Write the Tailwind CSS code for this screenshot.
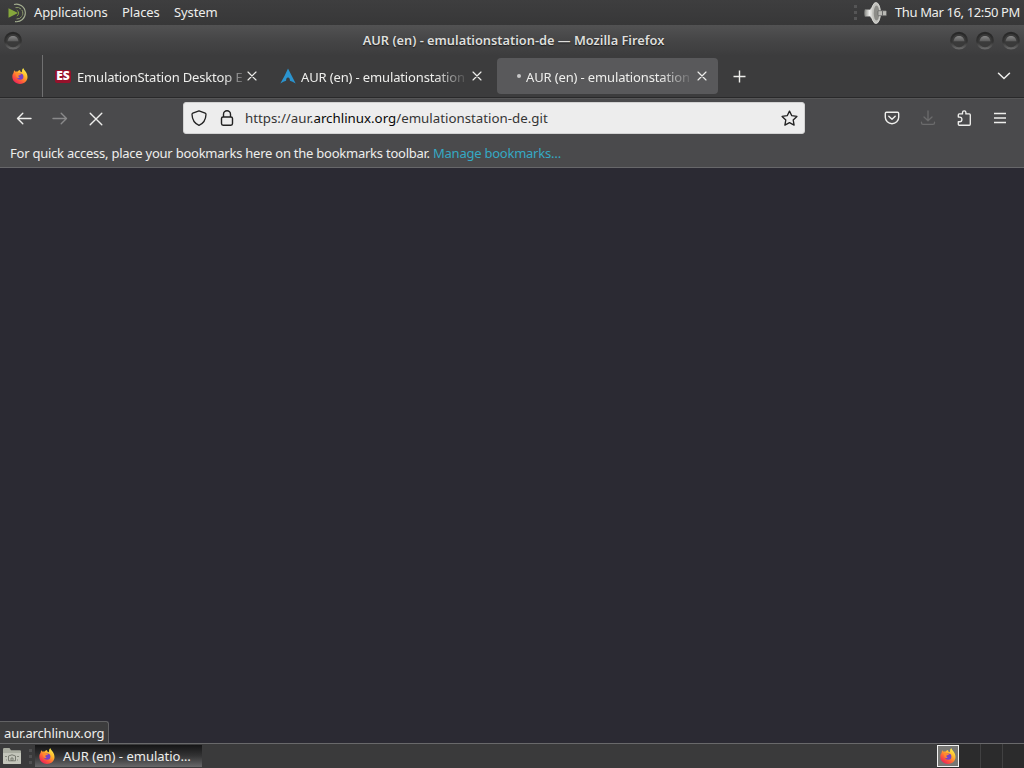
<!DOCTYPE html>
<html lang="en">
<head>
	<meta charset="utf-8">
	<title>AUR (en) - emulationstation-de — Mozilla Firefox</title>
	<script src="https://cdn.jsdelivr.net/npm/@tailwindcss/browser@4"></script>
</head>
<body class="w-screen h-screen overflow-hidden flex flex-col bg-[#2b2a33] text-[#eeeeec] text-[13px] leading-none whitespace-nowrap font-['Noto_Sans',sans-serif]">
	<!-- shared icons -->
	<svg class="absolute w-0 h-0">
		<defs>
			<linearGradient id="fx-flame" x1="0.85" y1="0.1" x2="0.25" y2="0.95">
				<stop offset="0" stop-color="#fff04a"/>
				<stop offset="0.35" stop-color="#ffb52c"/>
				<stop offset="0.65" stop-color="#ff6a35"/>
				<stop offset="1" stop-color="#ef2556"/>
			</linearGradient>
			<linearGradient id="silver" x1="0" y1="0" x2="1" y2="0">
				<stop offset="0" stop-color="#888a85"/>
				<stop offset="0.5" stop-color="#eeeeec"/>
				<stop offset="1" stop-color="#9a9a96"/>
			</linearGradient>
			<linearGradient id="dome" x1="0" y1="0" x2="0" y2="1">
				<stop offset="0" stop-color="#868686"/>
				<stop offset="1" stop-color="#585858"/>
			</linearGradient>
			<linearGradient id="rim" x1="0" y1="0" x2="0" y2="1">
				<stop offset="0" stop-color="#272727"/>
				<stop offset="0.6" stop-color="#343434"/>
				<stop offset="1" stop-color="#666666"/>
			</linearGradient>
			<symbol id="firefox" viewBox="0 0 16 16">
				<path fill="url(#fx-flame)" d="M2.6 2.2 3.5 3.8C4.3 3.4 5 3.4 5.7 3.6 6.5 2.6 7.4 2.2 8 2.1L8.3 3.6 10 4.2C9.8 2.5 10.2 1.1 11.2 0 11.6 1.6 13 2.5 13.9 4 16 7.3 16 10.6 14 13.2 11 16.7 5.3 16.8 2.2 13.4-.2 10.8-.1 7 1.5 5.1 1.6 4 1.9 3 2.6 2.2Z"/>
				<circle cx="8.2" cy="8.6" r="3.2" fill="#7542c6"/>
				<path fill="#ff8a2e" d="M3.3 5C5 4.3 6.5 4.8 7.4 5.8L9.3 6C8.9 7 7.2 7.1 6.5 7.4 6.2 8.5 6.7 9.5 7.9 9.8 6 10.8 4.2 9.3 4.2 7.5Z"/>
			</symbol>
			<symbol id="wm-button" viewBox="0 0 20 20">
				<circle cx="10" cy="9.6" r="7.8" fill="#3a3a3a" stroke="url(#rim)" stroke-width="2.2"/>
				<path d="M4.6 10.5C5 6.5 7.3 5 10 5s5 1.5 5.4 5.5Z" fill="url(#dome)"/>
				<path d="M4.4 10.8H15.6Q14.5 14.8 10 14.8T4.4 10.8Z" fill="#3a3a3a"/>
			</symbol>
			<symbol id="close" viewBox="0 0 10 10">
				<path d="M1 1 9 9M9 1 1 9" fill="none" stroke="currentColor" stroke-width="1.15" stroke-linecap="round"/>
			</symbol>
		</defs>
	</svg>

	<!-- top panel -->
	<header class="h-[25px] shrink-0 flex items-center justify-between bg-linear-to-b from-[#3e3e3f] to-[#373738] pl-[7px] pr-[3px]">
		<div class="flex items-center">
			<svg class="w-5 h-5 mr-[7px]" viewBox="0 0 20 20" fill="none">
				<path d="M1.5 5.2 11 10 1.5 14.8Z" fill="#86a83c"/>
				<path d="M8.5 4.6A5.8 5.8 0 1 1 8.5 15.8" stroke="#8a9a68" stroke-width="1" stroke-dasharray="6 1"/>
				<path d="M7 1.5A8.8 8.8 0 1 1 8 18.6" stroke="#a3ad90" stroke-width="1.1"/>
				<path d="M9.8 7.2A3.2 3.2 0 0 1 9.8 13" stroke="#86a83c" stroke-width="0.9"/>
			</svg>
			<nav class="flex gap-[14px] tracking-[-0.1px]">
				<span class="w-[74px]">Applications</span>
				<span class="w-[38px]">Places</span>
				<span>System</span>
			</nav>
		</div>
		<div class="flex items-center">
			<div class="flex flex-col gap-[3px] mr-[7px]">
				<i class="block w-[3px] h-[3px] bg-[#555556]"></i>
				<i class="block w-[3px] h-[3px] bg-[#555556]"></i>
				<i class="block w-[3px] h-[3px] bg-[#555556]"></i>
			</div>
			<svg class="w-6 h-6 mr-[7px]" viewBox="0 0 24 24">
				<path d="M1 8.5H6L11 1.5V22.5L6 15.5H1Q-.2 12 1 8.5Z" fill="url(#silver)" stroke="#777" stroke-width="0.6"/>
				<ellipse cx="12" cy="12" rx="4.5" ry="10.5" fill="#c2c2be" stroke="#dededa" stroke-width="0.8"/>
				<ellipse cx="12.5" cy="12" rx="2.8" ry="7.5" fill="#8c8c88"/>
				<rect x="14" y="9.7" width="8.5" height="5" rx="0.8" fill="#b9b9b5" stroke="#5f5f5f" stroke-width="0.7"/>
				<path d="M18.5 9.5V15" stroke="#666" stroke-width="1"/>
			</svg>
			<span class="w-[126px] tracking-[-0.38px]">Thu Mar 16, 12:50 PM</span>
		</div>
	</header>

	<!-- window title -->
	<div class="h-[31px] shrink-0 grid grid-cols-[80px_1fr_80px] items-center bg-linear-to-b from-[#525253] via-[#454546] to-[#3c3c3d]">
		<svg class="w-5 h-5 ml-[3px]"><use href="#wm-button"/></svg>
		<h1 class="text-center font-semibold text-[#dededc] text-[12.8px] [text-shadow:0_1px_1px_#1c1c1c] pl-[3px]">AUR (en) - emulationstation-de — Mozilla Firefox</h1>
		<div class="flex gap-[6px] justify-end pr-[3px]">
			<svg class="w-5 h-5"><use href="#wm-button"/></svg>
			<svg class="w-5 h-5"><use href="#wm-button"/></svg>
			<svg class="w-5 h-5"><use href="#wm-button"/></svg>
		</div>
	</div>

	<!-- tabs -->
	<div class="h-[42px] shrink-0 flex items-center bg-[#3c3c3d] border-b border-[#29292a] pb-px">
		<div class="w-[43px] h-[42px] border-r border-[#707071] flex items-center pl-[12px]">
			<svg class="w-4 h-4"><use href="#firefox"/></svg>
		</div>
		<div class="w-[225px] flex items-center pl-[12px]">
			<div class="w-4 h-[13px] bg-[#96112b] rounded-[2px] flex items-center justify-center font-['Open_Sans',sans-serif] font-extrabold text-[12px] text-white">ES</div>
			<span class="w-[167px] ml-[6px] pt-[6px] pb-1 tracking-[-0.16px] mask-r-from-88% mask-r-to-103%">EmulationStation Desktop E</span>
			<svg class="w-[10px] h-[10px] ml-[3px]"><use href="#close"/></svg>
		</div>
		<div class="w-[229px] flex items-center pl-[12px]">
			<svg class="w-4 h-4" viewBox="0 0 16 16">
				<path fill="#2b94cf" d="M8 .5 15.7 15.5Q12.3 13.2 9.9 12.8 10.1 9.7 8 9.5 5.9 9.7 6.1 12.8 3.5 13.2.3 15.5Q4.8 8 8 .5Z"/>
			</svg>
			<span class="w-[168px] ml-[5px] pt-[6px] pb-1 tracking-[-0.14px] mask-r-from-80% mask-r-to-100%">AUR (en) - emulationstation</span>
			<svg class="w-[10px] h-[10px] ml-[3px]"><use href="#close"/></svg>
		</div>
		<div class="w-[221px] h-[36px] flex items-center bg-[#59595b] rounded-[4px] pl-[20px]">
			<i class="block w-1 h-1 rounded-full bg-[#c8c8c8]"></i>
			<span class="w-[168px] ml-[5px] pt-[6px] pb-1 tracking-[-0.14px] mask-r-from-80% mask-r-to-100%">AUR (en) - emulationstation</span>
			<svg class="w-[10px] h-[10px] ml-[3px]"><use href="#close"/></svg>
		</div>
		<svg class="w-[13px] h-[13px] ml-[15px]" viewBox="0 0 13 13"><path d="M6.5.5V12.5M.5 6.5H12.5" stroke="currentColor" stroke-width="1.4"/></svg>
		<svg class="w-[14px] h-[8px] ml-auto mr-[13px]" viewBox="0 0 14 8" fill="none"><path d="M1.5 1.2 7 6.5 12.5 1.2" stroke="currentColor" stroke-width="1.5" stroke-linecap="round"/></svg>
	</div>

	<!-- navigation -->
	<div class="h-[41px] shrink-0 flex items-center bg-[#4a4a4c] border-t border-[#565657] pl-[16px] pr-[16px] pb-[2px]">
		<svg class="w-4 h-4" viewBox="0 0 16 16" fill="none" stroke="currentColor" stroke-width="1.4" stroke-linecap="round" stroke-linejoin="round"><path d="M15 8.5H1.5M6.8 3.2 1.5 8.5 6.8 13.8"/></svg>
		<svg class="w-4 h-4 ml-[20px] text-[#89898a]" viewBox="0 0 16 16" fill="none" stroke="currentColor" stroke-width="1.4" stroke-linecap="round" stroke-linejoin="round"><path d="M1 8.5H14.5M9.2 3.2 14.5 8.5 9.2 13.8"/></svg>
		<svg class="w-4 h-4 ml-[20px]" viewBox="0 0 16 16" fill="none" stroke="currentColor" stroke-width="1.4" stroke-linecap="round"><path d="M2.2 3.2 13.8 14.8M13.8 3.2 2.2 14.8"/></svg>
		<div class="w-[622px] h-8 ml-[79px] bg-[#ededed] border border-[#d2d2d2] rounded-[3px] flex items-center pl-[7px] pr-[6px] text-[#353535]">
			<svg class="w-4 h-4" viewBox="0 0 16 16" fill="none" stroke="#222" stroke-width="1.3" stroke-linejoin="round"><path d="M8 .8 14.2 3.2Q15 3.5 15 4.4C14.8 9.5 12.5 13.5 8 15.3 3.5 13.5 1.2 9.5 1 4.4Q1 3.5 1.8 3.2Z"/></svg>
			<svg class="w-4 h-4 ml-[12px]" viewBox="0 0 16 16" fill="none" stroke="#222" stroke-width="1.4"><path d="M4.5 7V4.2a3.5 3.5 0 0 1 7 0V7"/><rect x="2.5" y="7" width="11" height="8.2" rx="1.6"/></svg>
			<span class="ml-[10px] pt-[2px] text-[13.3px]">https://aur.<span class="text-[#080808]">archlinux.org</span>/emulationstation-de.git</span>
			<svg class="w-[17px] h-[17px] ml-auto" viewBox="0 0 17 17" fill="none" stroke="#222" stroke-width="1.35" stroke-linejoin="round"><path d="M8.5 1.1 10.8 5.7 15.9 6.4 12.2 10 13.1 15.1 8.5 12.7 3.9 15.1 4.8 10 1.1 6.4 6.2 5.7Z"/></svg>
		</div>
		<svg class="w-4 h-4 ml-auto" viewBox="0 0 16 16" fill="none" stroke="currentColor" stroke-width="1.4" stroke-linecap="round" stroke-linejoin="round"><path d="M2.5 2.2H13.5Q14.7 2.2 14.7 3.4V7.3A6.7 6.4 0 0 1 1.3 7.3V3.4Q1.3 2.2 2.5 2.2Z"/><path d="M4.8 6.2 8 9.3 11.2 6.2"/></svg>
		<svg class="w-4 h-4 ml-[20px] text-[#6b6b6c]" viewBox="0 0 16 16" fill="none" stroke="currentColor" stroke-width="1.3" stroke-linecap="round" stroke-linejoin="round"><path d="M8 1V10.5M4 7 8 10.8 12 7M1.5 12.2V13Q1.5 14.4 3 14.4H13Q14.5 14.4 14.5 13V12.2"/></svg>
		<svg class="w-4 h-4 ml-[20px]" viewBox="0 0 16 16" fill="none" stroke="currentColor" stroke-width="1.35" stroke-linejoin="round"><path d="M2.3 7.1V4.9Q2.3 3.9 3.3 3.9H6.5V2.6Q6.5.8 8.2.8T9.9 2.6V3.9H13.3Q14.3 3.9 14.3 4.9V14Q14.3 15.2 13.3 15.2H3.3Q2.3 15.2 2.3 14.2V11.7H3.7Q5.9 11.7 5.9 9.4T3.7 7.1Z"/></svg>
		<svg class="w-4 h-4 ml-[20px]" viewBox="0 0 16 16"><path d="M2 3.5H14M2 8H14M2 12.5H14" stroke="currentColor" stroke-width="1.3"/></svg>
	</div>

	<!-- bookmarks toolbar -->
	<div class="h-[29px] shrink-0 flex items-center bg-[#4a4a4c] border-b border-[#67676a] px-[10px] tracking-[-0.24px]">
		<p>For quick access, place your bookmarks here on the bookmarks toolbar. <a class="text-[#35a9c4]">Manage bookmarks…</a></p>
	</div>

	<!-- page, still blank while loading -->
	<main class="grow relative">
		<div class="absolute left-0 bottom-0 h-[22px] w-[109px] bg-[#3c3c3d] border-t border-r border-[#626264] rounded-tr-[3px] flex items-center pl-[4px] pt-[2px] tracking-[-0.16px]">aur.archlinux.org</div>
	</main>

	<!-- bottom panel -->
	<footer class="h-[25px] shrink-0 flex items-center bg-[#3a3a3b] border-t border-[#69696b]">
		<svg class="w-5 h-[18px] ml-[2px]" viewBox="0 0 20 18">
			<path d="M1 2.2Q1 1 2.2 1H7.5L9 3.2H18Q19 3.2 19 4.4V16Q19 17 18 17H2Q1 17 1 16Z" fill="#a9aca0"/>
			<path d="M1 6H19V16Q19 17 18 17H2Q1 17 1 16Z" fill="#c3c5ba"/>
			<path d="M6.5 9 10 7.8 13.5 9V13.8H6.5ZM9 11H11V13.5H9Z" fill="none" stroke="#777a70" stroke-width="1"/>
			<path d="M3 9.5H5M15 9.5H17M4 13H5M15 13H16" stroke="#84877c"/>
		</svg>
		<div class="flex flex-col gap-[3px] ml-[7px]">
			<i class="block w-[3px] h-[3px] bg-[#505051]"></i>
			<i class="block w-[3px] h-[3px] bg-[#505051]"></i>
			<i class="block w-[3px] h-[3px] bg-[#505051]"></i>
		</div>
		<div class="w-[167px] h-[22px] ml-[3px] flex items-center bg-linear-to-b from-[#151516] via-[#343435] to-[#68686a] pl-[4px]">
			<svg class="w-4 h-4"><use href="#firefox"/></svg>
			<span class="ml-[8px]">AUR (en) - emulatio…</span>
		</div>
		<!-- workspaces -->
		<div class="flex h-full items-center ml-auto bg-[#2b2b2c]">
			<div class="w-[22px] h-[22px] border border-[#f2f2f2] bg-[#777774] flex items-center justify-center">
				<svg class="w-4 h-4"><use href="#firefox"/></svg>
			</div>
			<div class="w-[22px] h-full border-r border-[#414142]"></div>
			<div class="w-[22px] h-full border-r border-[#414142]"></div>
			<div class="w-[21px] h-full"></div>
		</div>
	</footer>
</body>
</html>
